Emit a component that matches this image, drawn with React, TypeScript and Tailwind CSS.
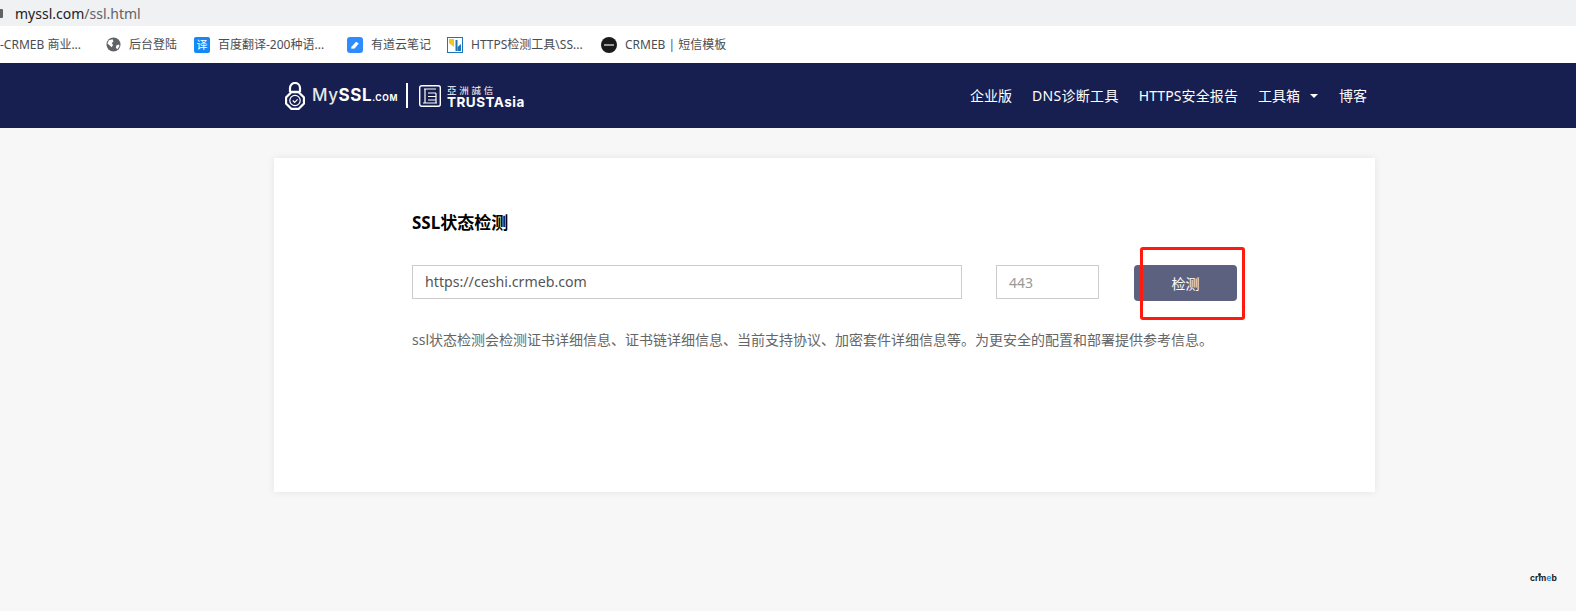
import React from "react";

const fontStack = "font-['Noto_Sans','Noto_Sans_CJK_SC',sans-serif]";

const GlobeIcon = () => (
  <svg viewBox="0 0 16 16" className="w-[15px] h-[15px]">
    <circle cx="8" cy="8" r="7.5" fill="#5f6368" />
    <path d="M3 3.5 7 2.5 8 5 6 6.5 7.5 8.500 6 11 4 9 1.500 7ZM11 9l2.500-1 1 1.500-2.500 3.500-1.500-1.500Z" fill="#fff" />
  </svg>
);

const YiIcon = () => (
  <div className="w-4 h-4 rounded-[2px] bg-[#1488f5] flex items-center justify-center text-white text-[11px] leading-none">
    译
  </div>
);

const NoteIcon = () => (
  <div className="w-4 h-4 rounded-[3px] bg-[#2f8cff] flex items-center justify-center">
    <svg viewBox="0 0 16 16" className="w-3 h-3">
      <path d="M3 10.500 9.500 3.500 13 6 7.500 12.500 3 13Z" fill="#fff" />
    </svg>
  </div>
);

const HttpsIcon = () => (
  <svg viewBox="0 0 16 16" className="w-4 h-4">
    <rect x="0.500" y="0.500" width="15" height="15" fill="#fff" stroke="#1a75bb" />
    <path d="M2 2h5v8L2 6Z" fill="#f5c518" />
    <path d="M8.500 3h2v11h-2Z" fill="#1a75bb" />
    <path d="M10.500 10l3.500-3v7h-3.500Z" fill="#1a75bb" />
  </svg>
);

const CrmebDot = () => (
  <div className="w-4 h-4 rounded-full bg-[#1b1b1b] flex items-center justify-center">
    <div className="w-[10px] h-[2px] bg-[#9a9a9a]" />
  </div>
);

const Bookmark = ({
  icon,
  label,
  className,
}: {
  icon: React.ReactNode;
  label: string;
  className: string;
}) => (
  <div className={`flex items-center shrink-0 ${className}`}>
    {icon}
    <span className="ml-2 text-[12px] text-[#4a4d52] whitespace-nowrap">{label}</span>
  </div>
);

const LockLogo = () => (
  <svg viewBox="0 0 20 28" className="w-5 h-7" fill="none" stroke="#fff">
    <path d="M5 10V6a5 5 0 0 1 10 0v4" strokeWidth="2.200" />
    <path d="M6.500 10h7L19 15.500v6L13.500 27h-7L1 21.500v-6Z" strokeWidth="2.300" strokeLinejoin="round" />
    <circle cx="10" cy="18.500" r="5.200" strokeWidth="1.200" />
    <path d="m7.800 18.500 1.800 1.800 3-3" strokeWidth="1.200" />
  </svg>
);

const TrustMark = () => (
  <svg viewBox="0 0 22 22" className="w-[22px] h-[22px]" fill="none" stroke="#fff">
    <rect x="0.700" y="0.700" width="20.600" height="20.600" rx="2" strokeWidth="1.400" />
    <path d="M5 4h12M6 4v14M17 8H9M9 11.500h8M9 15h8M17 8v10M4 18h14" strokeWidth="1.200" />
  </svg>
);

const NavLink = ({ children, className = "" }: { children: React.ReactNode; className?: string }) => (
  <span className={`text-[14px] text-white whitespace-nowrap ${className}`}>{children}</span>
);

export default function App() {
  return (
    <div className={`relative w-[1576px] h-[611px] overflow-hidden bg-[#f7f7f7] ${fontStack}`}>
      {/* browser chrome */}
      <div className="h-[26px] bg-[#f0f1f3] flex items-center">
        <div className="w-[3px] h-[9px] bg-[#5f6368] rounded-r-[1px]" />
        <span className="ml-3 text-[14px] text-[#5f6368]">
          <span className="text-[#202124]">myssl.com</span>/ssl.html
        </span>
      </div>
      <div className="h-[37px] bg-white flex items-center">
        <span className="text-[12px] text-[#4a4d52] whitespace-nowrap w-[106px]">-CRMEB 商业...</span>
        <Bookmark icon={<GlobeIcon />} label="后台登陆" className="w-[88px]" />
        <Bookmark icon={<YiIcon />} label="百度翻译-200种语..." className="w-[153px]" />
        <Bookmark icon={<NoteIcon />} label="有道云笔记" className="w-[100px]" />
        <Bookmark icon={<HttpsIcon />} label="HTTPS检测工具\SS..." className="w-[154px]" />
        <Bookmark icon={<CrmebDot />} label="CRMEB | 短信模板" className="" />
      </div>

      {/* site header */}
      <header className="h-[65px] bg-[#171f50] pl-[285px] pr-[209px] flex items-center justify-between">
        <div className="flex items-center">
          <LockLogo />
          <span className="ml-[7px] text-[17px] font-bold text-white tracking-[0.6px] font-['Inter',sans-serif] leading-none">
            <span className="font-medium text-[#e8e8e8]">My</span>
            <span>SSL</span>
            <span className="text-[8.5px]">.COM</span>
          </span>
          <div className="ml-[8px] w-[2px] h-[25px] bg-white" />
          <div className="ml-[11px]">
            <TrustMark />
          </div>
          <div className="ml-[6px] mt-[2px] flex flex-col">
            <span className="text-[9.5px] leading-[11px] text-white tracking-[2.8px]">亞洲誠信</span>
            <span className="text-[13.5px] leading-[13px] font-bold text-white font-['Inter',sans-serif] tracking-[0.5px]">
              TRUSTAsia
            </span>
          </div>
        </div>
        <nav className="flex items-center gap-5">
          <NavLink>企业版</NavLink>
          <NavLink className="tracking-[0.3px]">DNS诊断工具</NavLink>
          <NavLink className="tracking-[0.1px]">HTTPS安全报告</NavLink>
          <span className="flex items-center">
            <NavLink>工具箱</NavLink>
            <span className="ml-[10px] mr-[1px] w-0 h-0 border-x-[4px] border-x-transparent border-t-[4px] border-t-white" />
          </span>
          <NavLink>博客</NavLink>
        </nav>
      </header>

      {/* card */}
      <main className="pl-[274px] pt-[30px]">
        <section className="w-[1101px] h-[334px] bg-white shadow-[0_0_8px_rgba(0,0,0,0.08)] pl-[138px] pt-[53px]">
          <h1 className="text-[17px] font-bold text-black leading-[24px]">SSL状态检测</h1>
          <div className="mt-[30px] flex items-start">
            <div className="w-[550px] h-[34px] border border-[#cccccc] pl-3 flex items-center text-[14.2px] text-[#555]">
              https://ceshi.crmeb.com
            </div>
            <div className="ml-[34px] w-[103px] h-[34px] border border-[#cccccc] pl-3 flex items-center text-[14px] text-[#999]">
              443
            </div>
            <button className="ml-[35px] w-[103px] h-[36px] rounded-[4px] bg-[#5d6180] text-white text-[14px]">
              检测
            </button>
          </div>
          <p className="mt-[29px] text-[14px] leading-[20px] text-[#666] whitespace-nowrap">
            ssl状态检测会检测证书详细信息、证书链详细信息、当前支持协议、加密套件详细信息等。为更安全的配置和部署提供参考信息。
          </p>
        </section>
      </main>

      {/* red annotation over the button */}
      <div className="absolute left-[1140px] top-[247px] w-[105px] h-[73px] border-[3px] border-[#ff1a0f] rounded-[3px]" />

      {/* watermark */}
      <div className="absolute left-[1530px] top-[574px] text-[8.5px] font-bold leading-none text-[#222] font-['Inter',sans-serif]">
        <span className="absolute left-[8px] top-[-1px] w-[3px] h-[3px] rounded-full bg-[#222]" />
        crm<span className="text-[#2a8fe0]">e</span>b
      </div>
    </div>
  );
}
